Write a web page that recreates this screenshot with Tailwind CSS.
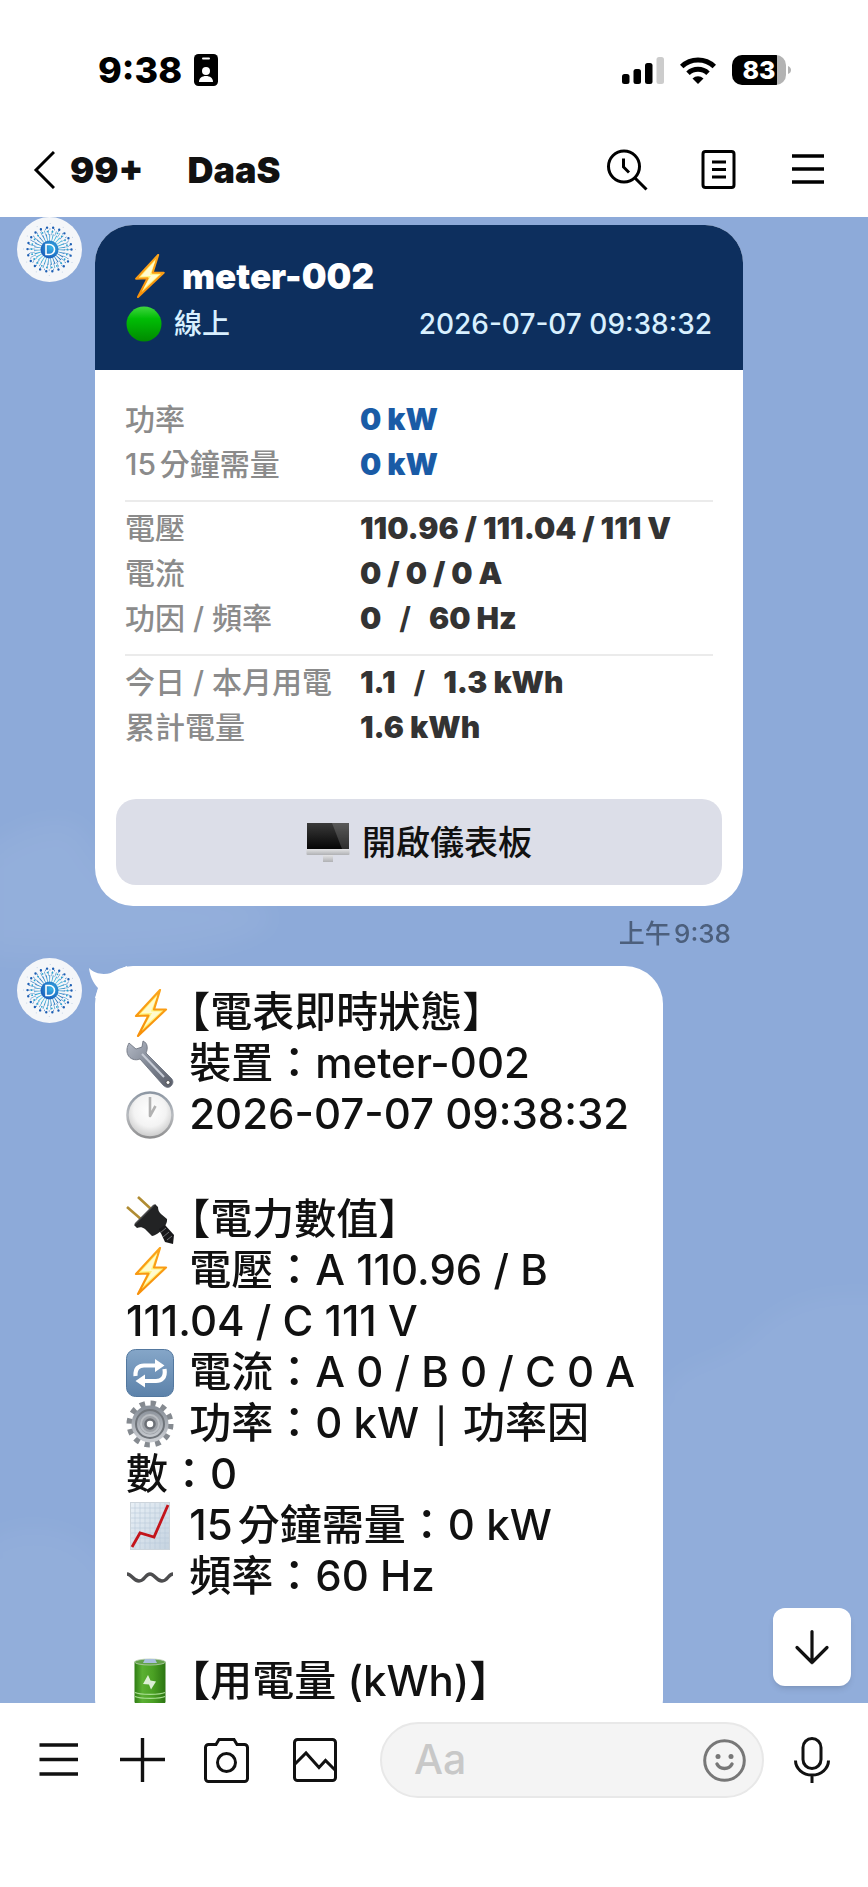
<!DOCTYPE html>
<html lang="zh-Hant">

<head>
    <meta charset="UTF-8">
    <meta name="viewport" content="width=device-width, initial-scale=1.0">
    <title>DaaS</title>
    <script src="https://cdn.jsdelivr.net/npm/@tailwindcss/browser@4"></script>
</head>

<body class="bg-white font-['Inter','Noto_Sans_CJK_TC',sans-serif] text-[#111111]">

    <!-- Shared icons -->
    <svg class="absolute size-0" aria-hidden="true">
        <defs>
            <linearGradient id="bolt-fill" x1="0" y1="0" x2="0" y2="1">
                <stop offset="0" stop-color="#fba51c" />
                <stop offset="1" stop-color="#f79009" />
            </linearGradient>
            <linearGradient id="steel" x1="0" y1="0" x2="1" y2="1">
                <stop offset="0" stop-color="#b4bac6" />
                <stop offset="0.5" stop-color="#7e8592" />
                <stop offset="1" stop-color="#5b5f6b" />
            </linearGradient>
            <linearGradient id="silver" x1="0" y1="0" x2="0" y2="1">
                <stop offset="0" stop-color="#8b929b" />
                <stop offset="1" stop-color="#c9ccd1" />
            </linearGradient>
            <linearGradient id="rim" x1="0" y1="0" x2="0" y2="1">
                <stop offset="0" stop-color="#8d97a3" />
                <stop offset="0.5" stop-color="#b9bcc0" />
                <stop offset="1" stop-color="#8f8f90" />
            </linearGradient>
            <radialGradient id="clock-face" cx="0.5" cy="0.4" r="0.6">
                <stop offset="0" stop-color="#ffffff" />
                <stop offset="0.6" stop-color="#f3f3f3" />
                <stop offset="1" stop-color="#c9c9c9" />
            </radialGradient>
            <linearGradient id="blue-key" x1="0" y1="0" x2="0" y2="1">
                <stop offset="0" stop-color="#85a6c8" />
                <stop offset="1" stop-color="#5c82aa" />
            </linearGradient>
            <linearGradient id="paper" x1="0" y1="0" x2="1" y2="1">
                <stop offset="0" stop-color="#e9f0f6" />
                <stop offset="1" stop-color="#c5d3e0" />
            </linearGradient>
            <linearGradient id="battery-green" x1="0" y1="0" x2="1" y2="0">
                <stop offset="0" stop-color="#2f7d14" />
                <stop offset="0.25" stop-color="#5bb033" />
                <stop offset="0.6" stop-color="#4aa023" />
                <stop offset="1" stop-color="#2c7512" />
            </linearGradient>
            <linearGradient id="green-ball" x1="0" y1="0" x2="0" y2="1">
                <stop offset="0" stop-color="#3fd63f" />
                <stop offset="0.35" stop-color="#00bd05" />
                <stop offset="1" stop-color="#008a00" />
            </linearGradient>
            <linearGradient id="screen" x1="0" y1="0" x2="0" y2="1">
                <stop offset="0" stop-color="#3a3a3a" />
                <stop offset="1" stop-color="#050505" />
            </linearGradient>
            <linearGradient id="stand" x1="0" y1="0" x2="0" y2="1">
                <stop offset="0" stop-color="#e3e3e5" />
                <stop offset="1" stop-color="#b0b1b4" />
            </linearGradient>
            <radialGradient id="core" cx="0.6" cy="0.4" r="0.7">
                <stop offset="0" stop-color="#38b6e8" />
                <stop offset="1" stop-color="#1451b4" />
            </radialGradient>
            <linearGradient id="rays" x1="0" y1="0" x2="1" y2="1">
                <stop offset="0" stop-color="#2a6fc0" />
                <stop offset="0.5" stop-color="#43c3e0" />
                <stop offset="1" stop-color="#1f5fb5" />
            </linearGradient>
        </defs>
        <symbol id="bolt" viewBox="0 0 48 48">
            <path d="M34 1 10 27 22.500 26.500 12 47 40 20.500 28 20.500Z" fill="#fff27a" stroke="url(#bolt-fill)"
                stroke-width="2.200" stroke-linejoin="round" />
            <path d="M31 7 15 24.500 26 24 18 38 35 22.500 25 22.500Z" fill="#fffbd0" />
        </symbol>
        <symbol id="avatar" viewBox="0 0 65 65">
            <circle cx="32.500" cy="32.500" r="32.500" fill="#f4f6f9" />
            <g fill="none">
                <circle cx="32.500" cy="32.500" r="12" stroke="url(#rays)" stroke-width="7" stroke-dasharray="0.800 2" />
                <circle cx="32.500" cy="32.500" r="17" stroke="#4d8fcb" stroke-width="5" stroke-dasharray="0.600 2.960" />
                <circle cx="32.500" cy="32.500" r="18" stroke="#27a5cf" stroke-width="1.800" stroke-linecap="round"
                    stroke-dasharray="0 5.140" />
                <circle cx="32.500" cy="32.500" r="20.500" stroke="#2b6dbd" stroke-width="1.600" stroke-dasharray="0.600 3.980" />
                <circle cx="32.500" cy="32.500" r="22" stroke="#1d5fb4" stroke-width="2.400" stroke-linecap="round"
                    stroke-dasharray="0 6.280" />
                <circle cx="32.500" cy="32.500" r="26" stroke="#b9cbe0" stroke-width="1" stroke-linecap="round"
                    stroke-dasharray="0 13.610" />
            </g>
            <circle cx="32.500" cy="32.500" r="9" fill="url(#core)" />
            <path d="M29 27.500h3.500a5 5 0 0 1 0 10H29Z" fill="none" stroke="#ffffff" stroke-width="1.600" />
        </symbol>
    </svg>

    <div class="flex h-screen flex-col">

        <header>
            <!-- Status bar -->
            <div class="flex h-[122px] items-center justify-between pt-[18px] pr-[76px] pl-[98px] text-black">
                <div class="flex items-center gap-3">
                    <span class="text-[36px] leading-10 font-extrabold">9:38</span>
                    <svg class="h-8 w-6" viewBox="0 0 24 32">
                        <rect width="24" height="32" rx="4.500" />
                        <rect x="8" y="3.500" width="8" height="2" rx="1" fill="#fff" />
                        <circle cx="12" cy="17" r="4" fill="#fff" />
                        <path d="M5 28c0-4 3-6 7-6s7 2 7 6Z" fill="#fff" />
                    </svg>
                </div>
                <div class="flex items-center">
                    <svg class="mr-4 h-[27px] w-[42px]" viewBox="0 0 42 27">
                        <rect x="0" y="17" width="7.500" height="10" rx="2.500" />
                        <rect x="11.500" y="12" width="7.500" height="15" rx="2.500" />
                        <rect x="23" y="6" width="7.500" height="21" rx="2.500" />
                        <rect x="34.500" y="0" width="7.500" height="27" rx="2.500" fill="#cccccc" />
                    </svg>
                    <svg class="mr-4 h-[27px] w-9" viewBox="0 0 36 27">
                        <g fill="none" stroke="#000" stroke-width="5">
                            <path d="M1.700 9.500a23.500 23.500 0 0 1 32.600 0" />
                            <path d="M8 16.200a14.600 14.600 0 0 1 20 0" />
                        </g>
                        <path d="M18 27l-5.500-5.500a8 8 0 0 1 11 0Z" />
                    </svg>
                    <div class="flex h-[30px] w-[54px] items-center justify-center overflow-hidden rounded-[10px] bg-linear-to-r from-black from-83% to-[#b3b3b3] to-83% text-[25px] leading-[30px] font-extrabold text-white">83</div>
                    <svg class="ml-0.5 h-2 w-1" viewBox="0 0 4 8">
                        <path d="M0 0c2 1 3 2 3 4s-1 3-3 4Z" fill="#b3b3b3" />
                    </svg>
                </div>
            </div>

            <!-- Title bar -->
            <nav class="flex h-[95px] items-center justify-between pr-[42px] pl-[33px] text-[36px] leading-10 font-black">
                <div class="flex items-center">
                    <button class="flex items-center gap-[15px]" aria-label="返回">
                        <svg class="h-[38px] w-[22px]" viewBox="0 0 22 38" fill="none" stroke="#000" stroke-width="3">
                            <path d="M21 1 3 19l18 18" />
                        </svg>
                        <span>99+</span>
                    </button>
                    <h1 class="ml-11">DaaS</h1>
                </div>
                <div class="flex items-center gap-[51px]">
                    <button aria-label="搜尋">
                        <svg class="size-[42px]" viewBox="0 0 42 42" fill="none" stroke="#000" stroke-width="3">
                            <circle cx="18" cy="17.500" r="15.500" />
                            <path d="M17.500 9.500v8.500l5.500 5.500M28.500 28.500 40.500 40.500" />
                        </svg>
                    </button>
                    <button aria-label="記事本">
                        <svg class="h-[42px] w-10" viewBox="0 0 40 42" fill="none" stroke="#000" stroke-width="3">
                            <rect x="4" y="2.500" width="31" height="36" rx="2.500" />
                            <path d="M13 13h14M13 20.500h14M13 28h14" />
                        </svg>
                    </button>
                    <button aria-label="選單">
                        <svg class="h-[42px] w-9" viewBox="0 0 36 42" fill="none" stroke="#000" stroke-width="3.400">
                            <path d="M2 7h32M2 20h32M2 33h32" />
                        </svg>
                    </button>
                </div>
            </nav>
        </header>

        <!-- Chat -->
        <main class="relative isolate min-h-0 flex-1 overflow-hidden bg-[#8daad9]">
            <svg class="absolute inset-0 -z-10 size-full" viewBox="0 0 868 1486" preserveAspectRatio="none">
                <defs>
                    <filter id="soft">
                        <feGaussianBlur stdDeviation="14" />
                    </filter>
                </defs>
                <g fill="#ffffff" filter="url(#soft)">
                    <path d="M-20 640C0 620 40 600 75 605c20 20 20 50 60 60 60 10 130 5 140 40-60 40-200 40-295 30Z"
                        opacity="0.060" />
                    <path d="M-20 1330c40-30 80-20 110 0 30 40 60 50 60 180H-20Z" opacity="0.050" />
                    <path d="M660 1180c20-40 60-30 90-60 30-35 80-50 140-40v430H660Z" opacity="0.045" />
                </g>
            </svg>

            <article class="flex items-start gap-[13px] pr-[125px] pl-[17px]">
                <svg class="size-[65px] shrink-0">
                    <use href="#avatar" />
                </svg>
                <div class="mt-2 flex-1">
                    <section class="overflow-hidden rounded-[38px] bg-white">
                        <div class="bg-[#0d2f5e] px-[31px] pt-[27px] pb-[23px]">
                            <h2 class="flex h-12 items-center gap-2.5 text-[35px] font-black text-white">
                                <svg class="h-[44px] w-[46px]" viewBox="0 0 48 48">
                                    <use href="#bolt" />
                                </svg>
                                meter-002
                            </h2>
                            <div class="flex h-[47px] items-center justify-between text-[28px] font-medium text-[#d8f0ff]">
                                <span class="flex items-center gap-3">
                                    <svg class="size-9" viewBox="0 0 36 36">
                                        <circle cx="18" cy="18" r="17.500" fill="url(#green-ball)" />
                                    </svg>
                                    線上
                                </span>
                                <time>2026-07-07 09:38:32</time>
                            </div>
                        </div>

                        <div class="divide-y-2 divide-[#ebebeb] px-[30px] pt-[23px] text-[30px] leading-[45px] [&_dd]:font-black [&_dd]:text-[#333333] [&_dt]:font-medium [&_dt]:text-[#8b8b8b] [&_dt]:[text-autospace:normal]">
                            <dl class="grid grid-cols-[235px_1fr] pt-1 pb-[13px]">
                                <dt>功率</dt>
                                <dd><span class="text-[#1a5ba6]">0 kW</span></dd>
                                <dt>15分鐘需量</dt>
                                <dd><span class="text-[#1a5ba6]">0 kW</span></dd>
                            </dl>
                            <dl class="grid grid-cols-[235px_1fr] pt-1 pb-[13px]">
                                <dt>電壓</dt>
                                <dd>110.96 / 111.04 / 111 V</dd>
                                <dt>電流</dt>
                                <dd>0 / 0 / 0 A</dd>
                                <dt>功因 / 頻率</dt>
                                <dd>0<span class="mx-[18px] font-bold">/</span>60 Hz</dd>
                            </dl>
                            <dl class="grid grid-cols-[235px_1fr] pt-1">
                                <dt>今日 / 本月用電</dt>
                                <dd>1.1<span class="mx-[18px] font-bold">/</span>1.3 kWh</dd>
                                <dt>累計電量</dt>
                                <dd>1.6 kWh</dd>
                            </dl>
                        </div>

                        <div class="px-[21px] pt-[49px] pb-[21px]">
                            <button class="flex h-[86px] w-full items-center justify-center gap-3 rounded-[20px] bg-[#dcdee8] text-[34px] font-medium">
                                <svg class="h-[40px] w-[44px]" viewBox="0 0 44 40">
                                    <path d="M17 33h10v7H17Z" fill="url(#stand)" />
                                    <rect x="0.500" y="27" width="43" height="6" rx="1" fill="url(#stand)" />
                                    <rect x="1" y="1" width="42" height="26" fill="url(#screen)" />
                                    <path d="M26 1h17v26h-7Z" fill="#ffffff" opacity="0.160" />
                                </svg>
                                開啟儀表板
                            </button>
                        </div>
                    </section>
                    <div class="mr-3 h-[52px] pt-2.5 text-right text-[26px] leading-9 font-medium text-[#4c5f7c] [text-autospace:normal]">上午9:38</div>
                </div>
            </article>

            <article class="flex items-start gap-[13px] pl-[17px]">
                <svg class="size-[65px] shrink-0">
                    <use href="#avatar" />
                </svg>
                <div class="relative mt-2 w-[568px] rounded-[38px] bg-white pt-5 pr-3 pb-8 pl-[31px] text-[42px] leading-[51px] font-medium [text-autospace:normal] [&_b]:font-medium [&_b]:[font-feature-settings:'halt'] [&_svg.e]:mr-1 [&_svg.e]:inline-block [&_svg.e]:size-12 [&_svg.e]:align-[-10px]">
                    <svg class="absolute top-0 -left-1.5 h-8 w-10" viewBox="0 0 40 32" fill="#fff">
                        <path d="M0 2C6 8 14 9 22 7L38 0V32H6L9 22C4 17 1 10 0 2Z" />
                    </svg>
                    <div class="relative flex flex-col gap-[54px]">
                        <div>
                            <p><svg class="e"><use href="#bolt" /></svg> <b>【</b>電表即時狀態<b>】</b></p>
                            <p><svg class="e" viewBox="0 0 48 48">
                                    <path d="M3 3 10 9l6-2 1-6c5 2 5 8 3 12l25 25c3 3 2 6 0 8s-5 2-8-1L14 19C9 21 4 19 2 15S1 7 3 3Z"
                                        fill="url(#steel)" stroke="#666c78" stroke-width="0.800" />
                                    <path d="M16 14 38 37" stroke="#c7ccd6" stroke-width="2" />
                                    <circle cx="42" cy="42.500" r="2" fill="#fff" stroke="#444" stroke-width="0.800" />
                                </svg> 裝置：meter-002</p>
                            <p><svg class="e" viewBox="0 0 48 48">
                                    <circle cx="24" cy="24" r="22.500" fill="url(#clock-face)" stroke="url(#rim)" stroke-width="2.600" />
                                    <path d="M24 6v19l5.500-10" fill="none" stroke="#b2b2b2" stroke-width="2.600" stroke-linejoin="round" />
                                </svg> 2026-07-07 09:38:32</p>
                        </div>
                        <div>
                            <p><svg class="e" viewBox="0 0 48 48">
                                    <path d="M1 11 16 24M12 1 25 13" stroke="#b08c33" stroke-width="2.600" />
                                    <path d="M8 29 29 8l3 3c0 3 1 5 3 7l6 5c1 6-8 16-15 17L19 33c-3-2-5-2-8-1Z" fill="#222324" />
                                    <path d="M9 28 28 9" stroke="#4a4b4c" stroke-width="1.500" />
                                    <path d="M33 33l6-4 9 10-1 9-8-2Z" fill="#18181a" />
                                    <path d="M34 37l6-5M37 41l6-5M41 44l5-4" stroke="#707174" stroke-width="1" />
                                </svg> <b>【</b>電力數值<b>】</b></p>
                            <p><svg class="e"><use href="#bolt" /></svg> 電壓：A 110.96 / B 111.04 / C 111 V</p>
                            <p><svg class="e" viewBox="0 0 48 48">
                                    <rect x="0.500" y="0.500" width="47" height="47" rx="9" fill="url(#blue-key)" stroke="#53789f" />
                                    <g fill="none" stroke="#fff" stroke-width="4.200">
                                        <path d="M9.500 27C9 19 13 16.500 18 16.500h13M38.500 20C40 29 35 32 30 32H17" />
                                    </g>
                                    <path d="M29 10l9.500 6.500L29 23ZM19 25.500 9.500 32l9.500 6.500Z" fill="#fff" />
                                </svg> 電流：A 0 / B 0 / C 0 A</p>
                            <p><svg class="e" viewBox="0 0 48 48">
                                    <circle cx="24" cy="24" r="20.500" fill="none" stroke="#858a90" stroke-width="6"
                                        stroke-dasharray="5.200 5.530" />
                                    <circle cx="24" cy="24" r="14.500" fill="#9b9fa5" stroke="url(#silver)" stroke-width="8" />
                                    <circle cx="24" cy="24" r="14" fill="none" stroke="#70757b" stroke-width="2" />
                                    <circle cx="24" cy="24" r="9" fill="none" stroke="#b9bdc2" stroke-width="2" />
                                    <circle cx="24" cy="24" r="4.500" fill="#fff" stroke="#6b6f75" stroke-width="2.500" />
                                </svg> 功率：0 kW<span class="mx-4 text-[34px] leading-none">|</span>功率因數：0</p>
                            <p><svg class="e" viewBox="0 0 48 48">
                                    <rect x="4.500" y="0.500" width="39" height="47" fill="url(#paper)" stroke="#cdd5dc" />
                                    <path d="M9 1v46M14 1v46M19 1v46M24 1v46M29 1v46M34 1v46M39 1v46M5 6h38M5 11h38M5 16h38M5 21h38M5 26h38M5 31h38M5 36h38M5 41h38"
                                        stroke="#b9cada" stroke-width="0.600" />
                                    <path d="M6 45 14 31l14 4L42 3" fill="none" stroke="#c3141b" stroke-width="2.800" />
                                </svg> 15分鐘需量：0 kW</p>
                            <p><svg class="e" viewBox="0 0 48 48">
                                    <path d="M1 21c5 0 6 7 12 7s6-7 11-7 6 7 12 7 6-7 11-7" fill="none" stroke="#4d4d4f"
                                        stroke-width="3.400" />
                                </svg> 頻率：60 Hz</p>
                        </div>
                        <div>
                            <p><svg class="e" viewBox="0 0 48 48">
                                    <path d="M8.500 4v40c0 2 7 4 15.500 4s15.500-2 15.500-4V4Z" fill="url(#battery-green)" />
                                    <ellipse cx="24" cy="4" rx="15.500" ry="3" fill="#63a24a" stroke="#b7cdb0" stroke-width="0.800" />
                                    <path d="M19 1h10l2 4H17Z" fill="#a9bfdc" />
                                    <path d="M9 34.500c5 2.500 25 2.500 30 0M9 38.500c5 2.500 25 2.500 30 0" fill="none" stroke="#a9dd92"
                                        stroke-width="1.300" />
                                    <path d="M22 17l-5 9 6 .500 2 5 5-8-5.500-1Z" fill="#dcefd5" />
                                </svg> <b>【</b>用電量 (kWh)<b>】</b></p>
                        </div>
                    </div>
                </div>
            </article>

            <button class="absolute right-[17px] bottom-[17px] flex size-[78px] items-center justify-center rounded-xl bg-white shadow-md" aria-label="捲動到最新訊息">
                <svg class="size-9" viewBox="0 0 36 36" fill="none" stroke="#111" stroke-width="3.200" stroke-linecap="round" stroke-linejoin="round">
                    <path d="M18 2.500v31M3 18.500l15 15 15-15" />
                </svg>
            </button>
        </main>

        <!-- Composer -->
        <footer class="flex h-[184px] items-start gap-[43px] bg-white pt-[19px] pr-[38px] pl-9">
            <div class="flex h-[76px] items-center gap-[39px]">
                <button aria-label="選單">
                    <svg class="size-[45px]" viewBox="0 0 45 45" fill="none" stroke="#111" stroke-width="3.400">
                        <path d="M3.500 7H42M3.500 21.500H42M3.500 36H42" />
                    </svg>
                </button>
                <button aria-label="新增">
                    <svg class="size-[45px]" viewBox="0 0 45 45" fill="none" stroke="#111" stroke-width="3.400">
                        <path d="M0 21.500h45M22.500 0v44" />
                    </svg>
                </button>
                <button aria-label="相機">
                    <svg class="size-[45px]" viewBox="0 0 45 45" fill="none" stroke="#111" stroke-width="3">
                        <path d="M4.500 6.500H12l3-5h15l3 5h7.500a3 3 0 0 1 3 3v31a3 3 0 0 1-3 3h-36a3 3 0 0 1-3-3v-31a3 3 0 0 1 3-3Z" />
                        <circle cx="22.500" cy="24.500" r="9" />
                    </svg>
                </button>
            </div>
            <button class="flex h-[76px] items-center" aria-label="相簿">
                <svg class="size-[45px]" viewBox="0 0 45 45" fill="none" stroke="#111" stroke-width="3">
                    <rect x="2.500" y="1.500" width="41" height="41" rx="3" />
                    <path d="M3 26 14 15l13 14.500 6.500-7L43 32" />
                </svg>
            </button>
            <div class="flex min-w-0 flex-1 items-center gap-[30px]">
                <div class="flex h-[76px] min-w-0 flex-1 items-center rounded-full border-2 border-[#e8e8e8] bg-[#f4f4f4] pr-4 pl-8">
                    <input type="text" placeholder="Aa" aria-label="訊息"
                        class="min-w-0 flex-1 bg-transparent text-[41px] font-medium outline-none placeholder:text-[#c8c8c8]">
                    <button aria-label="貼圖">
                        <svg class="size-[43px]" viewBox="0 0 43 43" fill="none" stroke="#777" stroke-width="3">
                            <circle cx="21.500" cy="21.500" r="19.800" />
                            <path d="M14 25c3 6 12 6 15 0" stroke-width="3.400" stroke-linecap="round" />
                            <g fill="#777" stroke="none">
                                <circle cx="15" cy="17.500" r="2.500" />
                                <circle cx="28" cy="17.500" r="2.500" />
                            </g>
                        </svg>
                    </button>
                </div>
                <button aria-label="語音訊息">
                    <svg class="h-[46px] w-9" viewBox="0 0 36 46" fill="none" stroke="#111" stroke-width="3">
                        <rect x="9" y="1.500" width="18" height="30" rx="9" />
                        <path d="M1.500 23.500a16.500 14.500 0 0 0 33 0M18 38v8" />
                    </svg>
                </button>
            </div>
        </footer>
    </div>
</body>

</html>
